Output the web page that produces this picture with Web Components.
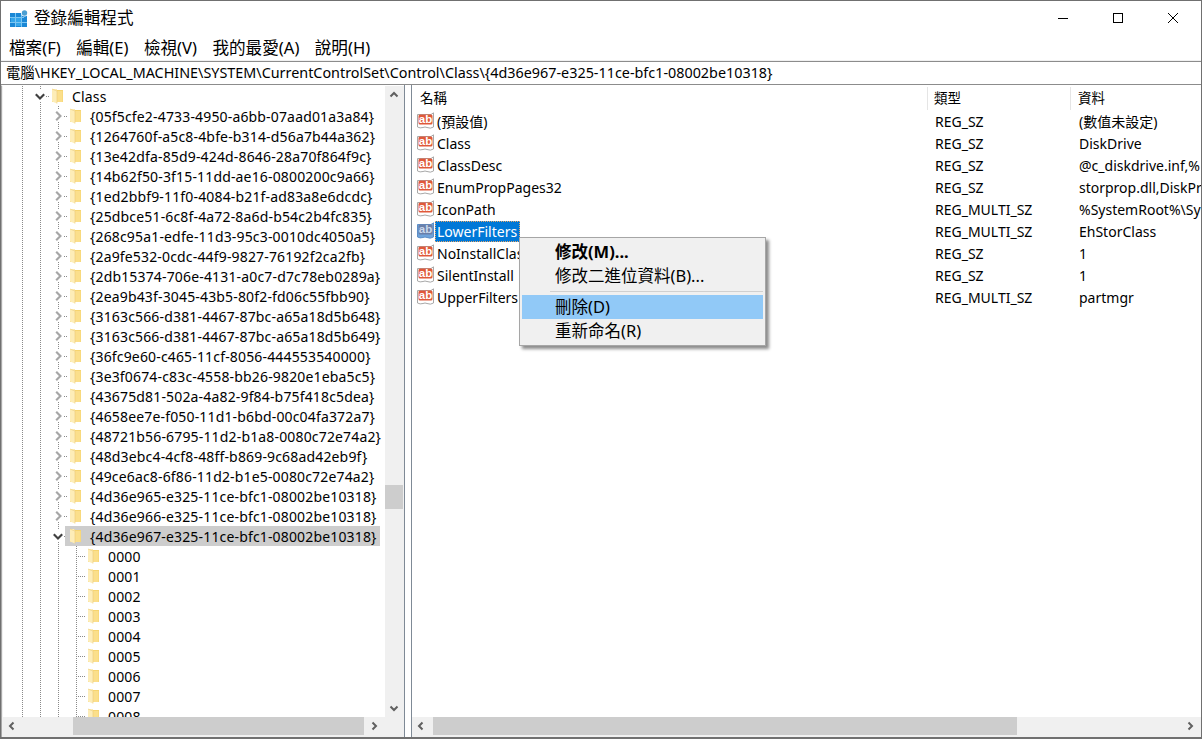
<!DOCTYPE html>
<html lang="zh-Hant">
<head>
<meta charset="utf-8">
<title>登錄編輯程式</title>
<style>
  html, body { margin: 0; padding: 0; background: #fff; }
  body { width: 1202px; height: 739px; overflow: hidden; font-family: "Noto Sans", "Noto Sans CJK TC", sans-serif; color: #000; }
</style>
</head>
<body>
<reg-window>
  <title-bar slot="top">登錄編輯程式</title-bar>
  <menu-bar slot="top"></menu-bar>
  <address-bar slot="top">電腦\HKEY_LOCAL_MACHINE\SYSTEM\CurrentControlSet\Control\Class\{4d36e967-e325-11ce-bfc1-08002be10318}</address-bar>
  <tree-pane slot="left"></tree-pane>
  <list-pane slot="right">
    <list-row name="(預設值)" type="REG_SZ" data="(數值未設定)"></list-row>
    <list-row name="Class" type="REG_SZ" data="DiskDrive"></list-row>
    <list-row name="ClassDesc" type="REG_SZ" data="@c_diskdrive.inf,%"></list-row>
    <list-row name="EnumPropPages32" type="REG_SZ" data="storprop.dll,DiskPr"></list-row>
    <list-row name="IconPath" type="REG_MULTI_SZ" data="%SystemRoot%\Sy"></list-row>
    <list-row name="LowerFilters" type="REG_MULTI_SZ" data="EhStorClass" selected></list-row>
    <list-row name="NoInstallClass" type="REG_SZ" data="1"></list-row>
    <list-row name="SilentInstall" type="REG_SZ" data="1"></list-row>
    <list-row name="UpperFilters" type="REG_MULTI_SZ" data="partmgr"></list-row>
  </list-pane>
  <context-menu slot="overlay"></context-menu>
</reg-window>

<script>
const GUIDS = [
  '05f5cfe2-4733-4950-a6bb-07aad01a3a84', '1264760f-a5c8-4bfe-b314-d56a7b44a362',
  '13e42dfa-85d9-424d-8646-28a70f864f9c', '14b62f50-3f15-11dd-ae16-0800200c9a66',
  '1ed2bbf9-11f0-4084-b21f-ad83a8e6dcdc', '25dbce51-6c8f-4a72-8a6d-b54c2b4fc835',
  '268c95a1-edfe-11d3-95c3-0010dc4050a5', '2a9fe532-0cdc-44f9-9827-76192f2ca2fb',
  '2db15374-706e-4131-a0c7-d7c78eb0289a', '2ea9b43f-3045-43b5-80f2-fd06c55fbb90',
  '3163c566-d381-4467-87bc-a65a18d5b648', '3163c566-d381-4467-87bc-a65a18d5b649',
  '36fc9e60-c465-11cf-8056-444553540000', '3e3f0674-c83c-4558-bb26-9820e1eba5c5',
  '43675d81-502a-4a82-9f84-b75f418c5dea', '4658ee7e-f050-11d1-b6bd-00c04fa372a7',
  '48721b56-6795-11d2-b1a8-0080c72e74a2', '48d3ebc4-4cf8-48ff-b869-9c68ad42eb9f',
  '49ce6ac8-6f86-11d2-b1e5-0080c72e74a2', '4d36e965-e325-11ce-bfc1-08002be10318',
  '4d36e966-e325-11ce-bfc1-08002be10318'
];
const OPEN_GUID = '4d36e967-e325-11ce-bfc1-08002be10318';
const MENUS = ['檔案(F)', '編輯(E)', '檢視(V)', '我的最愛(A)', '說明(H)'];
const CHEVRONS = {
  up: 'M1.5 6.5 L5 3 L8.5 6.5',
  down: 'M1.5 3.5 L5 7 L8.5 3.5',
  left: 'M6.5 1.5 L3 5 L6.5 8.5',
  right: 'M3.5 1.5 L7 5 L3.5 8.5'
};

class RegWindow extends HTMLElement {
  constructor() {
    super();
    this.attachShadow({ mode: 'open' });
    this.shadowRoot.innerHTML = `
      <style>
        :host {
          display: flex;
          flex-direction: column;
          position: relative;
          box-sizing: border-box;
          width: 1202px;
          height: 739px;
          border: 1px solid #707070;
          border-width: 1px 1px 2px 1px;
          background: #f0f0f0;
        }
        .panes { flex: 1; display: flex; min-height: 0; }
        .left { width: 403px; display: flex; }
        .split { width: 6px; background: #fff; border-left: 1px solid #7f8a96; border-right: 1px solid #7f8a96; }
        .right { flex: 1; display: flex; min-width: 0; }
      </style>
      <slot name="top"></slot>
      <div class="panes">
        <div class="left"><slot name="left"></slot></div>
        <div class="split"></div>
        <div class="right"><slot name="right"></slot></div>
      </div>
      <slot name="overlay"></slot>
    `;
  }
}

class TitleBar extends HTMLElement {
  constructor() {
    super();
    this.attachShadow({ mode: 'open' });
    this.shadowRoot.innerHTML = `
      <style>
        :host {
          display: flex;
          align-items: center;
          height: 35px;
          padding-right: 1px;
          background: #fff;
          font-size: 16.6px;
          color: #000;
        }
        .icon { width: 18px; height: 18px; margin: 1px 6px 0 9px; flex: none; }
        .text { flex: 1; position: relative; top: -2px; }
        .btn { width: 55px; height: 35px; display: flex; align-items: center; justify-content: center; }
        .btn svg { width: 12px; height: 12px; margin-top: -1px; }
      </style>
      <svg class="icon" viewBox="0 0 18 18">
        <rect x="0" y="3" width="17" height="14" fill="#1b88d6"/>
        <path d="M0 7.5 H14 M0 12.5 H17 M5.5 3 V17 M11.5 3 V17" stroke="#7cc6f2" stroke-width="1"/>
        <rect x="1" y="8" width="4" height="4" fill="#35a6ea"/>
        <rect x="6" y="8" width="5" height="4" fill="#35a6ea"/>
        <rect x="6" y="13" width="5" height="3" fill="#35a6ea"/>
        <circle cx="14.5" cy="3" r="3.4" fill="#fff"/>
        <circle cx="14.5" cy="3" r="2.7" fill="#4b9fd2"/>
      </svg>
      <span class="text"><slot></slot></span>
      <div class="btn"><svg viewBox="0 0 12 12"><path d="M1 6.5 H11" stroke="#000" fill="none"/></svg></div>
      <div class="btn"><svg viewBox="0 0 12 12"><rect x="1.5" y="1.5" width="9" height="9" stroke="#000" fill="none"/></svg></div>
      <div class="btn"><svg viewBox="0 0 12 12"><path d="M1 1 L11 11 M11 1 L1 11" stroke="#000" fill="none"/></svg></div>
    `;
  }
}

class MenuBar extends HTMLElement {
  constructor() {
    super();
    this.attachShadow({ mode: 'open' });
    this.shadowRoot.innerHTML = `
      <style>
        :host {
          display: flex;
          height: 24px;
          background: #fff;
          font-size: 16.6px;
          line-height: 24px;
        }
        span { padding: 0 7.4px 0 8px; white-space: nowrap; }
      </style>
      ${MENUS.map(m => `<span>${m}</span>`).join('')}
    `;
  }
}

class AddressBar extends HTMLElement {
  constructor() {
    super();
    this.attachShadow({ mode: 'open' });
    this.shadowRoot.innerHTML = `
      <style>
        :host {
          display: block;
          box-sizing: border-box;
          height: 25px;
          padding-top: 1px;
          background: #f0f0f0;
        }
        .box {
          box-sizing: border-box;
          height: 24px;
          background: #fff;
          border-top: 1px solid #8c8c8c;
          border-bottom: 1px solid #8c8c8c;
          padding-left: 5px;
          font-size: 14.37px;
          line-height: 21px;
          white-space: nowrap;
          overflow: hidden;
        }
      </style>
      <div class="box"><slot></slot></div>
    `;
  }
}

class ScrollBar extends HTMLElement {
  constructor() {
    super();
    this.attachShadow({ mode: 'open' });
  }

  connectedCallback() {
    const vertical = this.getAttribute('dir') === 'v';
    const start = this.getAttribute('start') || 0;
    const size = this.getAttribute('size') || 0;
    const [a, b] = vertical ? ['up', 'down'] : ['left', 'right'];
    const arrow = d => `<div class="arrow"><svg width="10" height="10" viewBox="0 0 10 10"><path d="${CHEVRONS[d]}" fill="none" stroke="#606060" stroke-width="2"/></svg></div>`;
    this.shadowRoot.innerHTML = `
      <style>
        :host {
          display: flex;
          flex-direction: ${vertical ? 'column' : 'row'};
          background: #f0f0f0;
          ${vertical ? 'width: 18px;' : 'height: 18px; padding-right: 2px;'}
        }
        .arrow { flex: none; width: 18px; height: 18px; display: flex; align-items: center; justify-content: center; }
        .track { flex: 1; min-width: 0; min-height: 0; }
        .thumb {
          background: #cdcdcd;
          ${vertical ? `margin-top: ${start}px; height: ${size}px;` : `margin-left: ${start}px; width: ${size}px; height: 100%;`}
        }
      </style>
      ${arrow(a)}
      <div class="track"><div class="thumb"></div></div>
      ${arrow(b)}
    `;
  }
}

class FolderIcon extends HTMLElement {
  constructor() {
    super();
    this.attachShadow({ mode: 'open' });
    this.shadowRoot.innerHTML = `
      <style>:host { display: block; width: 11px; height: 16px; flex: none; }</style>
      <svg width="11" height="16" viewBox="0 0 11 16">
        <path d="M0 1 H4 L5 2 H11 V14 H0 Z" fill="#f6d470"/>
        <path d="M5 3 H10.5 V14 H5 Z" fill="#fbdf8b"/>
        <path d="M0 1 H4 L5 3 V15.5 L0 13.5 Z" fill="#fdedb8"/>
        <path d="M0 1 L5 3 V15.5" fill="none" stroke="#eccb7a" stroke-width=".6"/>
      </svg>
    `;
  }
}

class TreeRow extends HTMLElement {
  constructor() {
    super();
    this.attachShadow({ mode: 'open' });
  }

  connectedCallback() {
    // guides = dotted columns before the last cell; state = open, closed or leaf
    const guides = parseInt(this.getAttribute('guides')) || 0;
    const state = this.getAttribute('state');
    const selected = this.hasAttribute('selected');
    const icon = state === 'leaf' ? ''
      : `<svg class="chev" width="12" height="12" viewBox="0 0 10 10"><path d="${state === 'open' ? CHEVRONS.down : CHEVRONS.right}" fill="none" stroke="${state === 'open' ? '#404040' : '#a6a6a6'}" stroke-width="1.8"/></svg>`;
    this.shadowRoot.innerHTML = `
      <style>
        :host {
          display: flex;
          align-items: stretch;
          height: 20px;
          padding-left: 10px;
          font-size: 14px;
          letter-spacing: .16px;
          white-space: nowrap;
        }
        .cell { position: relative; width: 18px; flex: none; }
        .cell::before {
          content: '';
          position: absolute;
          left: 9px; top: 0; bottom: 0;
          width: 1px;
          background: repeating-linear-gradient(to bottom, #8a8a8a 0 1px, transparent 1px 2px);
        }
        .cell.last::after {
          content: '';
          position: absolute;
          left: 10px; right: -1px; top: 10px;
          height: 1px;
          background: repeating-linear-gradient(to right, transparent 0 1px, #8a8a8a 1px 2px);
        }
        .chev { position: absolute; left: 3px; top: 4px; background: #fff; z-index: 1; }
        .label {
          display: flex;
          align-items: center;
          gap: 9px;
          margin-left: -2px;
          padding: 0 3px 0 5px;
          background: ${selected ? '#cdcdcd' : 'transparent'};
          position: relative;
        }
      </style>
      ${'<div class="cell"></div>'.repeat(guides)}
      <div class="cell last">${icon}</div>
      <div class="label"><folder-icon></folder-icon><span><slot></slot></span></div>
    `;
  }
}

class TreePane extends HTMLElement {
  constructor() {
    super();
    this.attachShadow({ mode: 'open' });
    const row = (guides, state, text, extra = '') =>
      `<tree-row guides="${guides}" state="${state}" ${extra}>${text}</tree-row>`;
    const rows = [
      row(1, 'open', 'Class'),
      ...GUIDS.map(g => row(2, 'closed', `{${g}}`)),
      row(2, 'open', `{${OPEN_GUID}}`, 'selected'),
      ...[...Array(9).keys()].map(i => row(3, 'leaf', `000${i}`))
    ];
    this.shadowRoot.innerHTML = `
      <style>
        :host {
          flex: 1;
          display: grid;
          grid-template-columns: minmax(0, 1fr) 18px;
          grid-template-rows: minmax(0, 1fr) 18px;
          box-sizing: border-box;
          border-left: 1px solid #a8a8a8;
          border-top: 1px solid #fff;
          padding: 0 1px 2px 1px;
          background: #f0f0f0;
          min-width: 0;
        }
        .rows { background: #fff; overflow: hidden; }
        .corner { background: #f0f0f0; }
      </style>
      <div class="rows">${rows.join('')}</div>
      <scroll-bar dir="v" start="381" size="24"></scroll-bar>
      <scroll-bar dir="h" start="52" size="291"></scroll-bar>
      <div class="corner"></div>
    `;
  }
}

class AbIcon extends HTMLElement {
  constructor() {
    super();
    this.attachShadow({ mode: 'open' });
  }

  connectedCallback() {
    const sel = this.hasAttribute('selected');
    const paper = sel ? '#6fa3da' : '#fff';
    const line = sel ? '#5d8fc8' : '#a8a8a8';
    const box = sel ? '#6a7fa8' : '#e0593a';
    const ink = sel ? '#c9d8ec' : '#fff';
    this.shadowRoot.innerHTML = `
      <style>
        :host { display: block; width: 18px; height: 18px; flex: none; }
        text { font-family: "Liberation Sans", sans-serif; font-weight: bold; font-size: 11.5px; }
      </style>
      <svg width="18" height="18" viewBox="0 0 18 18">
        <path d="M.5 2.5 H14 L16.5 .8 V15 Q13.5 17 10 15.5 Q8 14.5 6 15.5 Q3 16.5 .5 15 Z" fill="${paper}" stroke="${line}"/>
        <rect x="1.5" y="2.5" width="14" height="10" rx="1.5" fill="${box}"/>
        <text x="8.5" y="11" text-anchor="middle" fill="${ink}">ab</text>
      </svg>
    `;
  }
}

class ListPane extends HTMLElement {
  constructor() {
    super();
    this.attachShadow({ mode: 'open' });
    this.shadowRoot.innerHTML = `
      <style>
        :host {
          flex: 1;
          display: flex;
          flex-direction: column;
          min-width: 0;
          padding-bottom: 2px;
          background: #f0f0f0;
          border-top: 1px solid #fff;
        }
        .body { flex: 1; min-height: 0; background: #fff; overflow: hidden; font-size: 14px; padding-top: 1px; }
        .head { display: flex; height: 23px; line-height: 22px; font-size: 13.5px; }
        .head div { box-sizing: border-box; border-right: 1px solid #e5e5e5; height: 23px; }
        .c1 { width: 516px; padding-left: 8px; }
        .c2 { width: 143px; padding-left: 6px; }
        .c3 { padding-left: 7px; border-right: 0 !important; }
      </style>
      <div class="body">
        <div class="head">
          <div class="c1">名稱</div>
          <div class="c2">類型</div>
          <div class="c3">資料</div>
        </div>
        <slot></slot>
      </div>
      <scroll-bar dir="h" start="3" size="584"></scroll-bar>
    `;
  }
}

class ListRow extends HTMLElement {
  constructor() {
    super();
    this.attachShadow({ mode: 'open' });
  }

  connectedCallback() {
    const sel = this.hasAttribute('selected');
    this.shadowRoot.innerHTML = `
      <style>
        :host {
          display: flex;
          align-items: center;
          height: 22px;
          line-height: 21px;
          font-size: 14px;
          white-space: nowrap;
        }
        .name { width: 516px; box-sizing: border-box; padding-left: 5px; display: flex; align-items: center; }
        .label { padding: 0 3px 0 2px; height: 21px; box-sizing: border-box; }
        .sel { background: #0078d7; color: #fff; outline: 1px dotted #e8a86a; outline-offset: -1px; }
        .type { width: 143px; box-sizing: border-box; padding-left: 7px; }
        .data { flex: 1; min-width: 0; padding-left: 8px; overflow: hidden; }
      </style>
      <div class="name">
        <ab-icon ${sel ? 'selected' : ''}></ab-icon>
        <span class="label ${sel ? 'sel' : ''}">${this.getAttribute('name')}</span>
      </div>
      <div class="type">${this.getAttribute('type')}</div>
      <div class="data">${this.getAttribute('data')}</div>
    `;
  }
}

class ContextMenu extends HTMLElement {
  constructor() {
    super();
    this.attachShadow({ mode: 'open' });
    this.shadowRoot.innerHTML = `
      <style>
        :host {
          position: absolute;
          left: 518px;
          top: 236px;
          width: 247px;
          box-sizing: border-box;
          padding: 2px;
          background: #f0f0f0;
          border: 1px solid #a6a6a6;
          box-shadow: 3px 3px 3px rgba(0,0,0,.45);
          font-size: 16.5px;
          color: #000;
        }
        .item { height: 24px; line-height: 24px; padding-left: 33px; white-space: nowrap; }
        .bold { font-weight: 700; }
        .hot { background: #91c9f7; }
        .sep { height: 1px; background: #d0d0d0; margin: 3px 0 3px 28px; }
      </style>
      <div class="item bold">修改(M)...</div>
      <div class="item">修改二進位資料(B)...</div>
      <div class="sep"></div>
      <div class="item hot">刪除(D)</div>
      <div class="item">重新命名(R)</div>
    `;
  }
}

customElements.define('reg-window', RegWindow);
customElements.define('title-bar', TitleBar);
customElements.define('menu-bar', MenuBar);
customElements.define('address-bar', AddressBar);
customElements.define('scroll-bar', ScrollBar);
customElements.define('folder-icon', FolderIcon);
customElements.define('tree-row', TreeRow);
customElements.define('tree-pane', TreePane);
customElements.define('ab-icon', AbIcon);
customElements.define('list-pane', ListPane);
customElements.define('list-row', ListRow);
customElements.define('context-menu', ContextMenu);
</script>
</body>
</html>
